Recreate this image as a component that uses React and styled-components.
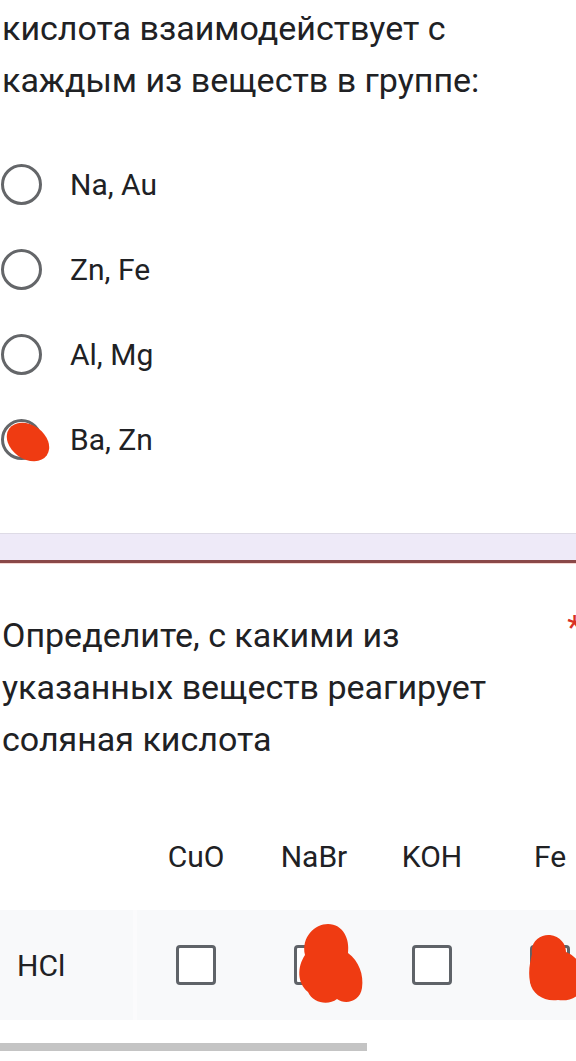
import React from "react";
import styled, { createGlobalStyle } from "styled-components";

const Global = createGlobalStyle`
  html, body { margin: 0; padding: 0; background: #fff; }
  body { font-family: Roboto, "Noto Sans", sans-serif; color: #202124; }
`;

const Page = styled.div`
  width: 576px;
  height: 1061px;
  overflow: hidden;
  background: #fff;
`;

const Title = styled.div`
  display: flex;
  align-items: flex-start;
  font-size: 34px;
  line-height: 52px;
  padding: ${(p) => p.$pt || 0}px 0 0 2px;
  margin-top: ${(p) => p.$mt || 0}px;
`;

const TitleText = styled.div`
  flex: 1;
`;

const Asterisk = styled.span`
  color: #d93025;
  font-size: 34px;
  line-height: 52px;
  margin-right: -6px;
  margin-top: -8px;
`;

const Options = styled.div`
  margin-top: 36px;
  display: flex;
  flex-direction: column;
`;

const Option = styled.label`
  height: 85px;
  display: flex;
  align-items: center;
  gap: 28px;
  font-size: 30px;
  padding-left: 1px;
`;

const RadioWrap = styled.span`
  position: relative;
  width: 41px;
  height: 41px;
  flex-shrink: 0;
`;

const RadioRing = styled.span`
  display: block;
  width: 41px;
  height: 41px;
  box-sizing: border-box;
  border: 3.5px solid #646669;
  border-radius: 50%;
`;

const Scribble = styled.svg`
  position: absolute;
  left: ${(p) => p.$x}px;
  top: ${(p) => p.$y}px;
  overflow: visible;
  pointer-events: none;
`;

const Divider = styled.div`
  margin-top: 51px;
  height: 26px;
  background: #eeeaf8;
  border-top: 1px solid #dedbe6;
  border-bottom: 3px solid #8a4848;
  box-shadow: 0 1px 0 #f6d6d2;
`;

const Table = styled.div`
  margin-top: 61px;
  width: 576px;
  overflow: hidden;
`;

const Row = styled.div`
  display: grid;
  grid-template-columns: 137px repeat(4, 118px) 118px;
  width: 727px;
  height: ${(p) => p.$h}px;
  margin-top: ${(p) => p.$mt || 0}px;
  background: ${(p) => p.$bg || "transparent"};
`;

const HeadCell = styled.div`
  display: flex;
  align-items: center;
  justify-content: center;
  font-size: 30px;
  color: #202124;
`;

const RowHead = styled.div`
  display: flex;
  align-items: center;
  padding-left: 17px;
  font-size: 30px;
  border-right: 4px solid #fbfbfc;
`;

const Cell = styled.div`
  position: relative;
  display: flex;
  align-items: center;
  justify-content: center;
`;

const Box = styled.span`
  display: block;
  width: 40px;
  height: 40px;
  box-sizing: border-box;
  border: 3.5px solid #5f6368;
  border-radius: 4px;
  background: #fff;
`;

const Scrollbar = styled.div`
  margin-top: 23px;
  width: 367px;
  height: 8px;
  background: #c4c4c4;
`;

const RED = "#ef3b12";

const RadioBlob = () => (
  <Scribble $x={0} $y={0} width="41" height="41">
    <ellipse cx="27" cy="23" rx="23" ry="17" fill={RED} transform="rotate(35 27 23)" />
  </Scribble>
);

const NaBrBlob = () => (
  <Scribble $x={40} $y={11} width="72" height="85">
    <path
      fill={RED}
      d="M 10 34 C 6 16, 20 3, 33 3 C 48 3, 55 18, 53 32 C 64 40, 69 54, 67 67 C 65 81, 50 84, 42 78 C 33 85, 18 82, 13 71 C 2 62, 2 46, 10 34 Z"
    />
  </Scribble>
);

const FeBlob = () => (
  <Scribble $x={35} $y={22} width="60" height="72">
    <path
      fill={RED}
      d="M 6 22 C 4 8, 16 2, 24 3 C 34 4, 40 12, 40 20 C 50 24, 58 34, 58 48 C 58 64, 44 70, 32 68 C 18 70, 6 62, 4 50 C 2 40, 4 30, 6 22 Z"
    />
  </Scribble>
);

const options = ["Na, Au", "Zn, Fe", "Al, Mg", "Ba, Zn"];
const cols = ["CuO", "NaBr", "KOH", "Fe", ""];

export default function App() {
  return (
    <Page>
      <Global />
      <Title $pt={2}>
        <TitleText>
          кислота взаимодействует с
          <br />
          каждым из веществ в группе:
        </TitleText>
      </Title>
      <Options>
        {options.map((o, i) => (
          <Option key={o}>
            <RadioWrap>
              <RadioRing />
              {i === 3 && <RadioBlob />}
            </RadioWrap>
            {o}
          </Option>
        ))}
      </Options>
      <Divider />
      <Title $mt={46}>
        <TitleText>
          Определите, с какими из
          <br />
          указанных веществ реагирует
          <br />
          соляная кислота
        </TitleText>
        <Asterisk>*</Asterisk>
      </Title>
      <Table>
        <Row $h={60}>
          <div />
          {cols.map((c) => (
            <HeadCell key={c || "x"}>{c}</HeadCell>
          ))}
        </Row>
        <Row $h={110} $mt={24} $bg="#f8f9fa">
          <RowHead>HCl</RowHead>
          {cols.map((c) => (
            <Cell key={c || "x"}>
              <Box />
              {c === "NaBr" && <NaBrBlob />}
              {c === "Fe" && <FeBlob />}
            </Cell>
          ))}
        </Row>
      </Table>
      <Scrollbar />
    </Page>
  );
}
